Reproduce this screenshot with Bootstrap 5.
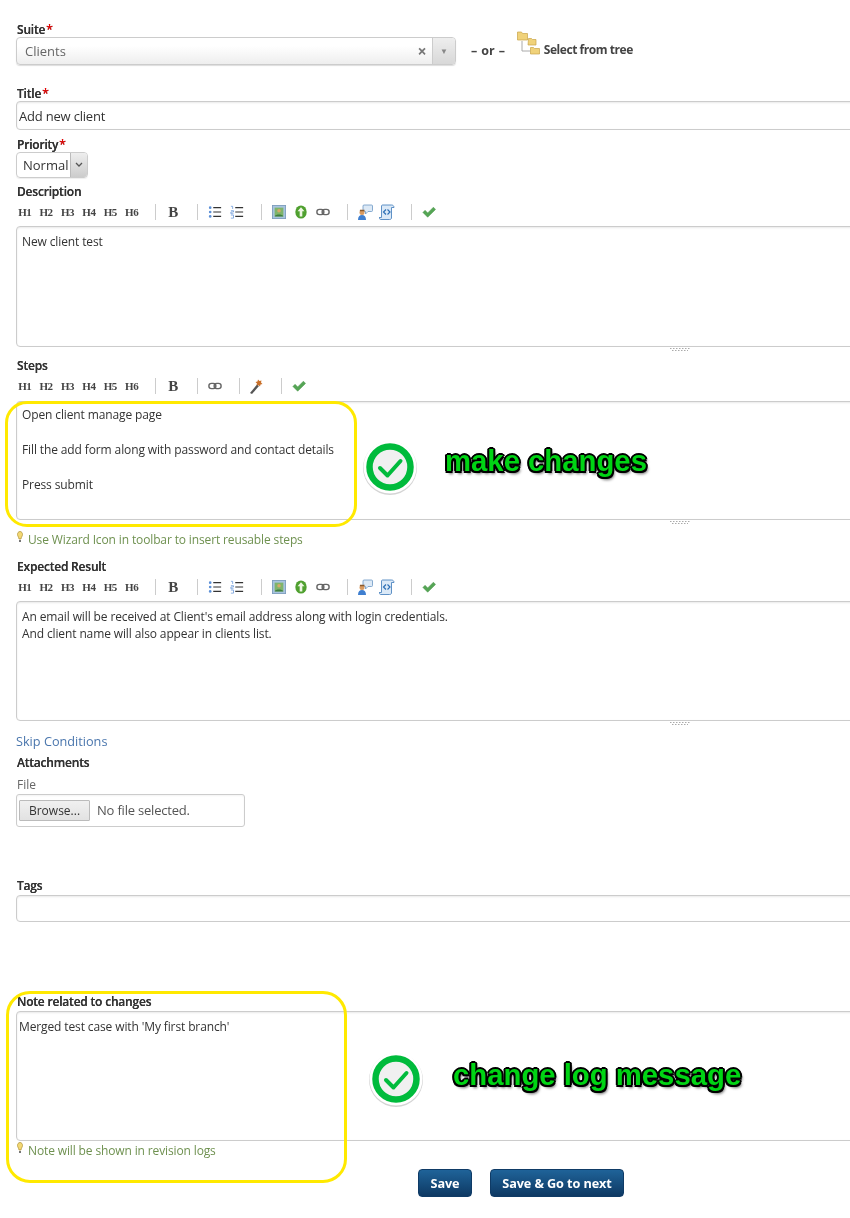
<!DOCTYPE html>
<html lang="en">
<head>
<meta charset="utf-8">
<title>Edit test case</title>
<link rel="stylesheet" href="https://cdn.jsdelivr.net/npm/bootstrap@5.3.0/dist/css/bootstrap.min.css">
<style>
html,body{height:100%;overflow:hidden;background:#fff}
body{font-family:"Open Sans","Noto Sans",sans-serif;font-size:12px;color:#333}
.stage{position:relative;width:850px;height:1218px;overflow:hidden;filter:blur(.35px)}
.sheet{width:1328px;margin-left:16px;padding-top:21px}
.lbl{display:block;height:16px;line-height:18px;margin:0;padding-left:1px;font-size:12px;font-weight:600;letter-spacing:-.2px;color:#333;text-shadow:0 0 .4px #333}
.req{color:#e00;margin-left:1px}
.suite-row{height:28px}
.combo{width:440px;height:28px;border:1px solid #ccc;border-radius:4px;background:linear-gradient(#fff 30%,#eee);box-shadow:0 1px 1px #ddd;font-size:13px;color:#666;line-height:26px}
.combo-val{padding-left:8px}
.combo-x{width:20px;text-align:center;font-size:16px;font-weight:700;color:#777;line-height:27px}
.combo-arrow{width:23px;background:linear-gradient(#eee,#d8d8d8);border-left:1px solid #ccc;border-radius:0 3px 3px 0;color:#888;font-size:8px;text-align:center;line-height:26px}
.or-txt{margin-left:15px;font-weight:700;letter-spacing:-.1px;color:#444;font-size:12.5px;padding-top:5px;word-spacing:1px}
.tree-ico{margin-left:12px;margin-top:-6px;margin-right:3px;width:24px;height:24px}
.tree-txt{font-weight:700;letter-spacing:-.45px;color:#444;font-size:12px;padding-top:4px;line-height:18px}
.f-title{margin-top:20px}
.fld{display:block;width:100%;border:1px solid #ccc;border-radius:4px;background:#fff;box-shadow:inset 0 1px 2px rgba(0,0,0,.09);color:#333;outline:0}
.fld-title{height:29px;font-size:13px;padding:0 2px;line-height:28px;letter-spacing:-.2px}
.f-pri{margin-top:6px}
.pri{width:72px;height:26px;border:1px solid #ccc;border-radius:4px;font-size:13px;line-height:24px;box-shadow:0 1px 1px #eee}
.pri-val{padding-left:6px;flex:1}
.pri-btn{width:17px;background:linear-gradient(#eee,#ccc);border-left:1px solid #bbb;border-radius:0 3px 3px 0}
.f-desc{margin-top:5px}
.tbar{height:24px;margin:1px 0 2px -2px}
.tbar-steps{margin-bottom:3px}
.tool{width:21.4px;height:24px;line-height:24px;font-family:"Liberation Serif",serif;font-size:11px;font-weight:700;letter-spacing:-.5px;color:#444}
.ico{width:22px;height:24px}
.boldb{font-family:"Liberation Serif",serif;font-size:15px;line-height:24px;font-weight:700;color:#444}
.sep{width:1px;height:16px;background:#ccc;margin:0 6px 0 13px}
.area{resize:none;font-size:12px;line-height:17.5px;padding:6px 5px;overflow:hidden;letter-spacing:-.12px}
.h121{height:121px}
.h120{height:120px}
.h119{height:119px;padding-top:4px}
.lh17{line-height:17px}
.h130{height:130px;padding-left:2px;margin-top:2px}
.grip{height:5px;color:#999;font-size:0}
.f-steps{margin-top:5px}
.hint{height:16px;line-height:16px;color:#6f9150;font-size:12px;letter-spacing:-.13px}
.hint-steps{margin-top:6px}
.f-exp{margin-top:11px}
.skip{display:block;margin-top:7px;height:16px;line-height:16px;color:#4a76ad;font-size:12.7px;text-decoration:none}
.f-att{margin-top:5px}
.f-file{margin-top:7px;color:#666;height:16px;line-height:16px;padding-left:1px}
.filebox{width:229px;height:33px;margin-top:1px;border:1px solid #ccc;border-radius:3px;padding-left:2px;font-size:13px;letter-spacing:-.2px;color:#555;box-shadow:inset 0 1px 2px rgba(0,0,0,.05)}
.browse{width:71px;height:21px;padding:0;border:1px solid #bbb;border-radius:1px;background:linear-gradient(#f0f0f0,#e2e2e2);font-size:12px;line-height:19px;color:#333;margin-right:7px}
.f-tags{margin-top:50px}
.fld-tags{height:27px;margin-top:2px}
.f-note{margin-top:71px}
.hint-note{margin-top:1px}
.hint-ico{margin-right:1px;vertical-align:1px}
.acts{width:850px;margin-left:-16px;margin-top:11px;padding-left:418px}
.go{height:28px;padding:0;border:1px solid #0f3b66;border-radius:4px;background:linear-gradient(#1f6399,#0e3963);color:#fff;font-size:12.7px;font-weight:700;letter-spacing:-.1px;line-height:26px}
.go:hover{color:#fff}
.go-a{width:54px;margin-right:18px}
.go-b{width:134px}
.ring{position:absolute;border:3px solid #ffe900;background:transparent;pointer-events:none}
.ring-a{left:5px;top:401px;width:352px;height:126px;border-radius:22px}
.ring-b{left:6px;top:991px;width:341px;height:192px;border-radius:24px}
.mark-ok{position:absolute;width:56px;height:58px}
.mark-a{left:362px;top:439px}
.mark-b{left:368px;top:1051px}
.call{position:absolute;font-family:"Liberation Sans",Arial,sans-serif;font-weight:700;font-size:29.3px;line-height:32px;color:#00d414;white-space:nowrap;text-shadow:-2px 0 0 #000,2px 0 0 #000,0 -2px 0 #000,0 2px 0 #000,-1.5px -1.5px 0 #000,1.5px -1.5px 0 #000,-1.5px 1.5px 0 #000,1.5px 1.5px 0 #000,2px 3px 3px rgba(0,0,0,.6)}
.call-a{left:445px;top:445px}
.call-b{left:453px;top:1059px}
</style>
</head>
<body>
<svg width="0" height="0" class="d-none">
<defs>
<symbol id="i-ul" viewBox="0 0 16 16"><g fill="#5b8fd6"><circle cx="2.500" cy="3" r="1.500"/><circle cx="2.500" cy="8" r="1.500"/><circle cx="2.500" cy="13" r="1.500"/></g><path d="M6 3h9M6 8h9M6 13h9" stroke="#333" stroke-width="1.200"/></symbol>
<symbol id="i-ol" viewBox="0 0 16 16"><path d="M1 1.500h2v3M1 6.500h3v1.500h-3v2h3M1 11.500h3v3.500h-3" fill="none" stroke="#5b8fd6" stroke-width=".8"/><path d="M6 3h9M6 8h9M6 13h9" stroke="#333" stroke-width="1.200"/></symbol>
<symbol id="i-img" viewBox="0 0 16 16"><rect x=".5" y=".5" width="15" height="15" fill="#a8c4e0" stroke="#7c9cbc"/><rect x="3" y="3" width="10" height="10" fill="#7fb46a"/><circle cx="8" cy="6.500" r="2" fill="#d8a86a"/><path d="M3 13c1-3 9-3 10 0z" fill="#3f7f3f"/></symbol>
<symbol id="i-up" viewBox="0 0 16 16"><ellipse cx="8" cy="8" rx="6.500" ry="7.500" fill="#4fa02f"/><path d="M8 2.500 12 7H9.500v6h-3V7H4z" fill="#eef6e4"/></symbol>
<symbol id="i-link" viewBox="0 0 16 16"><rect x="1" y="5" width="8" height="6" rx="3" fill="none" stroke="#666" stroke-width="1.600"/><rect x="7" y="5" width="8" height="6" rx="3" fill="none" stroke="#666" stroke-width="1.600"/></symbol>
<symbol id="i-user" viewBox="0 0 16 16"><path d="M7 1h7.500a1 1 0 0 1 1 1v4.500a1 1 0 0 1-1 1H11L8.500 10V7.500H7a1 1 0 0 1-1-1V2a1 1 0 0 1 1-1z" fill="#dce9f6" stroke="#6c97c4" stroke-width=".8"/><circle cx="5" cy="8.500" r="2.500" fill="#d89a60"/><path d="M3 5.800h4.500v1.500H2.800z" fill="#8a5a2c"/><path d="M1 16c0-3.500 1.500-5 4-5s4 1.500 4 5z" fill="#3f7fd0"/></symbol>
<symbol id="i-html" viewBox="0 0 16 16"><path d="M3.500 1h9c1.500 0 2.500 1 2.500 2.500h-2.500V14c0 1-1 1.500-2 1.500H2c-1 0-2-.7-2-2h2.500V2c0-.5.400-1 1-1z" fill="#dbe9f7" stroke="#4f86c0" stroke-width=".9"/><path d="M7 5.500 4.500 8 7 10.500M8.500 5.500 11 8l-2.500 2.500" fill="none" stroke="#2d6fb5" stroke-width="1.200"/></symbol>
<symbol id="i-ok" viewBox="0 0 16 16"><path d="M1 8.500 3.500 6l3 3L13 2.500l2.500 2.500-9 9z" fill="#55a555" stroke="#3f8f3f" stroke-width=".5"/></symbol>
<symbol id="i-wand" viewBox="0 0 16 16"><path d="M1 15 8 6.500l2 1.500-7 8z" fill="#555"/><path d="M9 1.500l1.500 1.500 2-.5-.5 2 1.500 1.500-2 .5-.5 2-1.500-1.500-2 .5.500-2L6.500 4l2-.5z" fill="#c9702a"/></symbol>
<symbol id="i-bulb" viewBox="0 0 8 12"><path d="M4 .5C2.300.5 1.500 2 1.500 3.500 1.500 5.200 2.800 6 3 8h2C5.200 6 6.500 5.200 6.500 3.500 6.500 2 5.700.5 4 .5z" fill="#f3d873" stroke="#a98b2c" stroke-width=".7"/><path d="M3 9h2v2H3z" fill="#777"/></symbol>
<symbol id="i-good" viewBox="0 0 56 58"><circle cx="28" cy="29" r="27" fill="#d4d4d4"/><circle cx="28" cy="28" r="26.500" fill="#fff"/><circle cx="28" cy="28" r="20.500" fill="#f0f0f0" stroke="#00bb3c" stroke-width="6.500"/><path d="M18 29l7.500 7.500L38.500 22" fill="none" stroke="#00bb3c" stroke-width="4" stroke-linecap="round" stroke-linejoin="round"/></symbol>
<symbol id="i-tree" viewBox="0 0 24 24"><path d="M5 10v10h8M11 13h3" fill="none" stroke="#aaa"/><g fill="#f0d27a" stroke="#c8a548" stroke-width=".7"><path d="M.5 1h4l1 1.500h5V9H.5z"/><path d="M11.500 7.500h3l1 1h3.500V14h-8z"/><path d="M13.500 16.500h3l1 1h5V23h-9z"/></g></symbol>
</defs>
</svg>

<div class="stage">
  <form class="sheet">
    <label class="lbl">Suite<span class="req">*</span></label>
    <div class="suite-row d-flex">
      <div class="combo d-flex">
        <span class="combo-val flex-grow-1">Clients</span>
        <span class="combo-x">×</span>
        <span class="combo-arrow">▼</span>
      </div>
      <span class="or-txt">– or –</span>
      <svg class="tree-ico"><use href="#i-tree"/></svg>
      <span class="tree-txt">Select from tree</span>
    </div>

    <label class="lbl f-title">Title<span class="req">*</span></label>
    <div class="fld fld-title">Add new client</div>

    <label class="lbl f-pri">Priority<span class="req">*</span></label>
    <div class="pri d-flex">
      <span class="pri-val">Normal</span>
      <span class="pri-btn d-flex align-items-center justify-content-center"><svg width="8" height="6" viewBox="0 0 8 6"><path d="M1 1l3 3 3-3" fill="none" stroke="#555" stroke-width="1.300"/></svg></span>
    </div>

    <label class="lbl f-desc">Description</label>
    <div class="tbar d-flex align-items-center">
      <span class="tool text-center">H1</span><span class="tool text-center">H2</span><span class="tool text-center">H3</span><span class="tool text-center">H4</span><span class="tool text-center">H5</span><span class="tool text-center">H6</span>
      <span class="sep"></span><span class="ico boldb text-center">B</span>
      <span class="sep"></span><svg class="ico"><use href="#i-ul" width="14" height="14" x="4" y="5"/></svg><svg class="ico"><use href="#i-ol" width="14" height="14" x="4" y="5"/></svg>
      <span class="sep"></span><svg class="ico"><use href="#i-img" width="14" height="14" x="4" y="5"/></svg><svg class="ico"><use href="#i-up" width="14" height="14" x="4" y="5"/></svg><svg class="ico"><use href="#i-link" width="14" height="14" x="4" y="5"/></svg>
      <span class="sep"></span><svg class="ico"><use href="#i-user" width="16" height="16" x="3" y="4"/></svg><svg class="ico"><use href="#i-html" width="16" height="16" x="3" y="4"/></svg>
      <span class="sep"></span><svg class="ico"><use href="#i-ok" width="14" height="14" x="4" y="5"/></svg>
    </div>
    <textarea class="fld area h121" readonly>New client test</textarea>
    <div class="grip"><svg width="1328" height="5"><path d="M654 1.500h20M656 3.500h16" stroke="#aaa" stroke-dasharray="1.500 1.500"/></svg></div>

    <label class="lbl f-steps">Steps</label>
    <div class="tbar tbar-steps d-flex align-items-center">
      <span class="tool text-center">H1</span><span class="tool text-center">H2</span><span class="tool text-center">H3</span><span class="tool text-center">H4</span><span class="tool text-center">H5</span><span class="tool text-center">H6</span>
      <span class="sep"></span><span class="ico boldb text-center">B</span>
      <span class="sep"></span><svg class="ico"><use href="#i-link" width="14" height="14" x="4" y="5"/></svg>
      <span class="sep"></span><svg class="ico"><use href="#i-wand" width="16" height="16" x="3" y="4"/></svg>
      <span class="sep"></span><svg class="ico"><use href="#i-ok" width="14" height="14" x="4" y="5"/></svg>
    </div>
    <textarea class="fld area h119" readonly>Open client manage page

Fill the add form along with password and contact details

Press submit</textarea>
    <div class="grip"><svg width="1328" height="5"><path d="M654 1.500h20M656 3.500h16" stroke="#aaa" stroke-dasharray="1.500 1.500"/></svg></div>
    <div class="hint hint-steps"><svg class="hint-ico" width="8" height="12"><use href="#i-bulb"/></svg> Use Wizard Icon in toolbar to insert reusable steps</div>

    <label class="lbl f-exp">Expected Result</label>
    <div class="tbar d-flex align-items-center">
      <span class="tool text-center">H1</span><span class="tool text-center">H2</span><span class="tool text-center">H3</span><span class="tool text-center">H4</span><span class="tool text-center">H5</span><span class="tool text-center">H6</span>
      <span class="sep"></span><span class="ico boldb text-center">B</span>
      <span class="sep"></span><svg class="ico"><use href="#i-ul" width="14" height="14" x="4" y="5"/></svg><svg class="ico"><use href="#i-ol" width="14" height="14" x="4" y="5"/></svg>
      <span class="sep"></span><svg class="ico"><use href="#i-img" width="14" height="14" x="4" y="5"/></svg><svg class="ico"><use href="#i-up" width="14" height="14" x="4" y="5"/></svg><svg class="ico"><use href="#i-link" width="14" height="14" x="4" y="5"/></svg>
      <span class="sep"></span><svg class="ico"><use href="#i-user" width="16" height="16" x="3" y="4"/></svg><svg class="ico"><use href="#i-html" width="16" height="16" x="3" y="4"/></svg>
      <span class="sep"></span><svg class="ico"><use href="#i-ok" width="14" height="14" x="4" y="5"/></svg>
    </div>
    <textarea class="fld area h120 lh17" readonly>An email will be received at Client's email address along with login credentials.
And client name will also appear in clients list.</textarea>
    <div class="grip"><svg width="1328" height="5"><path d="M654 1.500h20M656 3.500h16" stroke="#aaa" stroke-dasharray="1.500 1.500"/></svg></div>

    <a class="skip" href="#">Skip Conditions</a>
    <label class="lbl f-att">Attachments</label>
    <div class="f-file">File</div>
    <div class="filebox d-flex align-items-center">
      <button type="button" class="browse">Browse...</button><span>No file selected.</span>
    </div>

    <label class="lbl f-tags">Tags</label>
    <div class="fld fld-tags"></div>

    <label class="lbl f-note">Note related to changes</label>
    <textarea class="fld area h130" readonly>Merged test case with 'My first branch'</textarea>
    <div class="hint hint-note"><svg class="hint-ico" width="8" height="12"><use href="#i-bulb"/></svg> Note will be shown in revision logs</div>

    <div class="acts d-flex">
      <button type="button" class="btn go go-a">Save</button>
      <button type="button" class="btn go go-b">Save &amp; Go to next</button>
    </div>
  </form>

  <div class="ring ring-a"></div>
  <div class="ring ring-b"></div>
  <svg class="mark-ok mark-a"><use href="#i-good"/></svg>
  <svg class="mark-ok mark-b"><use href="#i-good"/></svg>
  <div class="call call-a">make changes</div>
  <div class="call call-b">change log message</div>
</div>
<script src="https://cdn.jsdelivr.net/npm/bootstrap@5.3.0/dist/js/bootstrap.bundle.min.js"></script>
</body>
</html>
